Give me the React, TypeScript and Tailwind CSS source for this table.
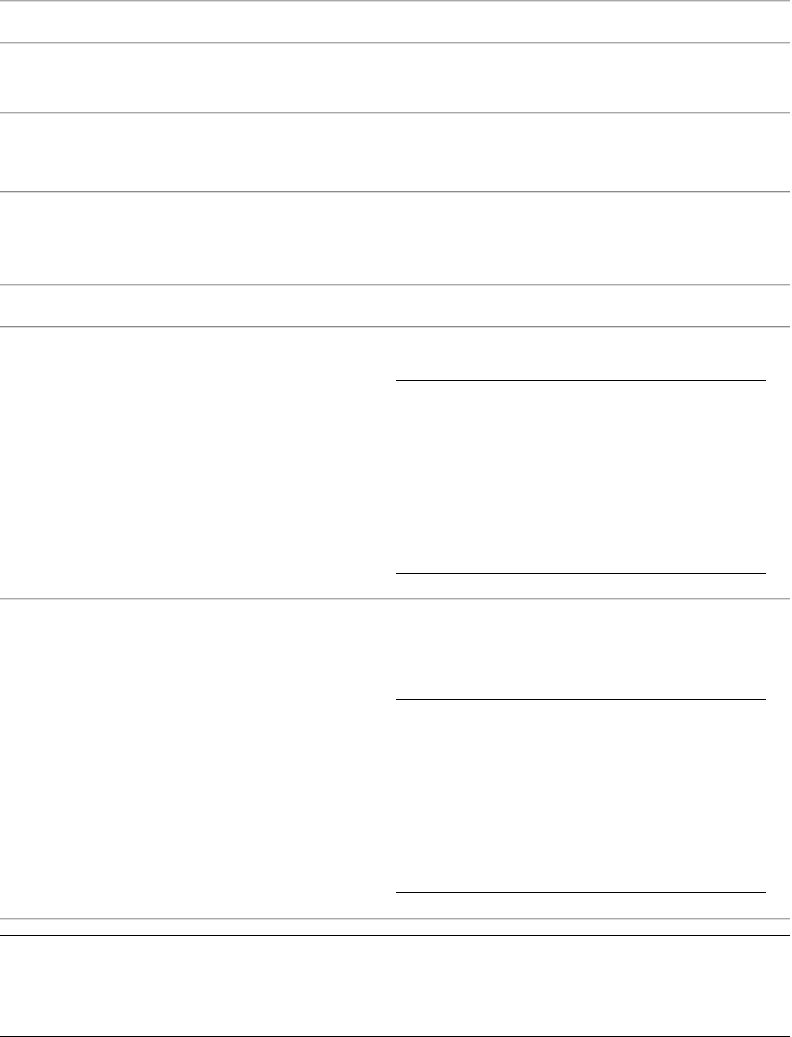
import React from 'react';

// two-tone rule, like an inset <hr>
const Rule = ({ dark = false }: { dark?: boolean }) => (
  <div
    className={
      dark
        ? 'h-[2px] border-t border-b border-t-[#8a8a8a] border-b-[#d8d8d8]'
        : 'h-[2px] border-t border-b border-t-[#a8a8a8] border-b-[#dcdcdc]'
    }
  />
);

export default function App() {
  return (
    <div className="w-[790px] bg-white font-['Liberation_Sans',Arial,sans-serif] text-sm text-black">
      <Rule />
      <div className="h-[40px]" />
      <Rule />
      <div className="h-[68px]" />
      <Rule />
      <div className="h-[77px]" />
      <Rule dark />
      <div className="h-[91px]" />
      <Rule />
      <div className="h-[40px]" />
      <Rule dark />

      <div className="grid grid-cols-[396px_370px] pt-[52px] pb-[24px]">
        <div />
        <div className="h-[194px] border-t border-b border-black" />
      </div>
      <Rule />

      <div className="grid grid-cols-[396px_370px] pt-[99px] pb-[25px]">
        <div />
        <div className="h-[194px] border-t border-b border-black" />
      </div>
      <Rule />

      <div className="mt-[15px] h-[102px] border-t border-b border-black" />
    </div>
  );
}
